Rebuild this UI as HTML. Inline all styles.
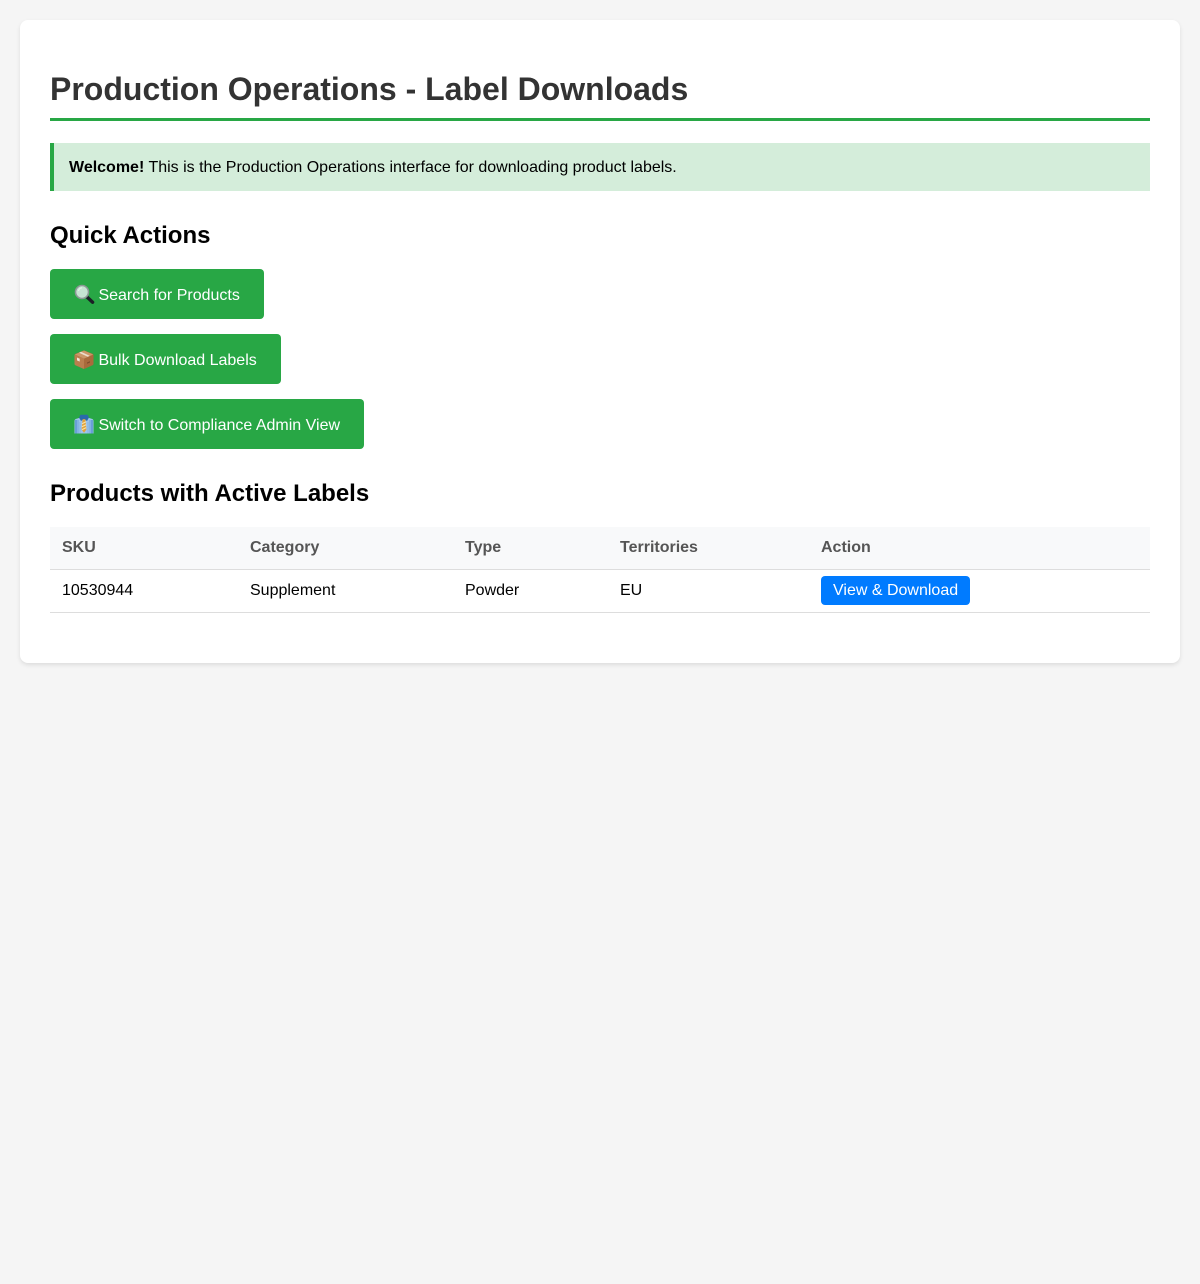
<!DOCTYPE html>
<html lang="en">
<head>
<meta charset="utf-8">
<title>Production Operations - Label Downloads</title>
<style>
*{box-sizing:border-box}
html,body{margin:0;padding:0}
body{width:1200px;height:1284px;background:#f5f5f5;font-family:"Liberation Sans",Arial,sans-serif;font-size:16px;color:#000;position:relative;overflow:hidden}
.container{position:absolute;left:20px;top:20px;width:1160px;height:643px;background:#fff;border-radius:8px;box-shadow:0 2px 4px rgba(0,0,0,.1)}
h1{position:absolute;left:30px;top:49px;width:1100px;height:52px;margin:0;padding-top:2px;font-size:32px;line-height:37px;font-weight:700;color:#333;border-bottom:3px solid #28a745}
.alert{position:absolute;left:30px;top:123px;width:1100px;height:48px;background:#d4edda;border-left:4px solid #28a745;padding:16px 15px 0;line-height:18px}
h2{position:absolute;left:30px;margin:0;font-size:24px;line-height:28px;font-weight:700}
.btn{position:absolute;left:30px;height:50px;background:#28a745;color:#fff;border-radius:4px;padding:0 24px 0 48.45px;line-height:54px;white-space:nowrap;text-decoration:none}
.btn svg{position:absolute;left:24px;top:15px;width:21px;height:21px}
table{position:absolute;left:30px;top:507px;width:1100px;border-collapse:collapse;table-layout:fixed}
th,td{text-align:left;padding:12px;border-bottom:1px solid #ddd;line-height:18px}
th{background:#f8f9fa;font-weight:700;color:#555;height:42px}
td{height:43px;padding-top:0;padding-bottom:0}
.dl{display:inline-block;position:relative;top:-1px;background:#007bff;color:#fff;border-radius:4px;padding:0 12px;height:29px;line-height:29px;text-decoration:none;vertical-align:middle}
</style>
</head>
<body>
<div class="container">
  <h1>Production Operations - Label Downloads</h1>
  <div class="alert"><strong>Welcome!</strong> This is the Production Operations interface for downloading product labels.</div>
  <h2 style="top:202px">Quick Actions</h2>
  <a class="btn" style="top:249px"><svg viewBox="0 0 21 21"><path d="M12.5 12.5L18.6 18.2" stroke="#1b2025" stroke-width="3.4" stroke-linecap="round"/><circle cx="8" cy="8" r="6.5" fill="#c6e4d2" stroke="#8d9896" stroke-width="1.6"/><path d="M4.5 7A3.8 3.8 0 0 1 8 3.8" fill="none" stroke="#e6f3ea" stroke-width="1.2"/></svg>Search for Products</a>
  <a class="btn" style="top:314px"><svg viewBox="0 0 21 21"><path d="M10 1.5Q10.500 1.500 11 1.700L18.500 4.800Q19.500 5.300 19.500 6.300V14.800Q19.500 15.800 18.500 16.300L11 19.600Q10 20 9 19.600L1.500 16.300Q.5 15.800 .5 14.800V6.300Q.5 5.300 1.500 4.800L9 1.700Q9.500 1.500 10 1.500Z" fill="#a96a3c"/><path d="M.8 5.500L10 1.500L19.200 5.500L10 9.600Z" fill="#cb9768"/><path d="M10 9.600V20L1.500 16.300Q.5 15.800 .5 14.800V5.700Z" fill="#bb7e4e"/><path d="M5 3.700L13.800 7.800L15.800 6.900L7 2.800Z" fill="#eadccd"/><path d="M3 8.500L5.700 9.700V12.600L3 11.400Z" fill="#f4e9dd"/><path d="M13 13.500L16 12.200V13.500L13 14.800Z" fill="#7d4c2a"/></svg>Bulk Download Labels</a>
  <a class="btn" style="top:379px"><svg viewBox="0 0 21 21"><path d="M.5 7Q.5 5.200 2.500 4.800L6.500 3.500H13.500L17.500 4.800Q19.500 5.200 19.500 7V19.500H.5Z" fill="#9cc4ec"/><path d="M1 6H3.500V19.500H1ZM16.500 6H19V19.500H16.500Z" fill="#6a9fd8"/><path d="M6 8V19.500M14 8V19.500M4.500 6V19.500M15.500 6V19.500" stroke="#7fb0e2" stroke-width=".8"/><path d="M6.500 .8H13.500L15 3.500L13 7L10 5L7 7L5 3.500Z" fill="#2a69ab"/><path d="M8.600 5.200H11.400L12.400 15.500L10 18.800L7.600 15.500Z" fill="#e3a33a"/><path d="M8 9.800L12 7.800M7.800 12.800L12.200 10.800M8 15.600L12.200 13.600" stroke="#f7e2ad" stroke-width="1.100"/></svg>Switch to Compliance Admin View</a>
  <h2 style="top:460px">Products with Active Labels</h2>
  <table>
    <colgroup><col style="width:188px"><col style="width:215px"><col style="width:155px"><col style="width:201px"><col style="width:341px"></colgroup>
    <tr><th>SKU</th><th>Category</th><th>Type</th><th>Territories</th><th>Action</th></tr>
    <tr><td>10530944</td><td>Supplement</td><td>Powder</td><td>EU</td><td><a class="dl">View &amp; Download</a></td></tr>
  </table>
</div>
</body>
</html>
